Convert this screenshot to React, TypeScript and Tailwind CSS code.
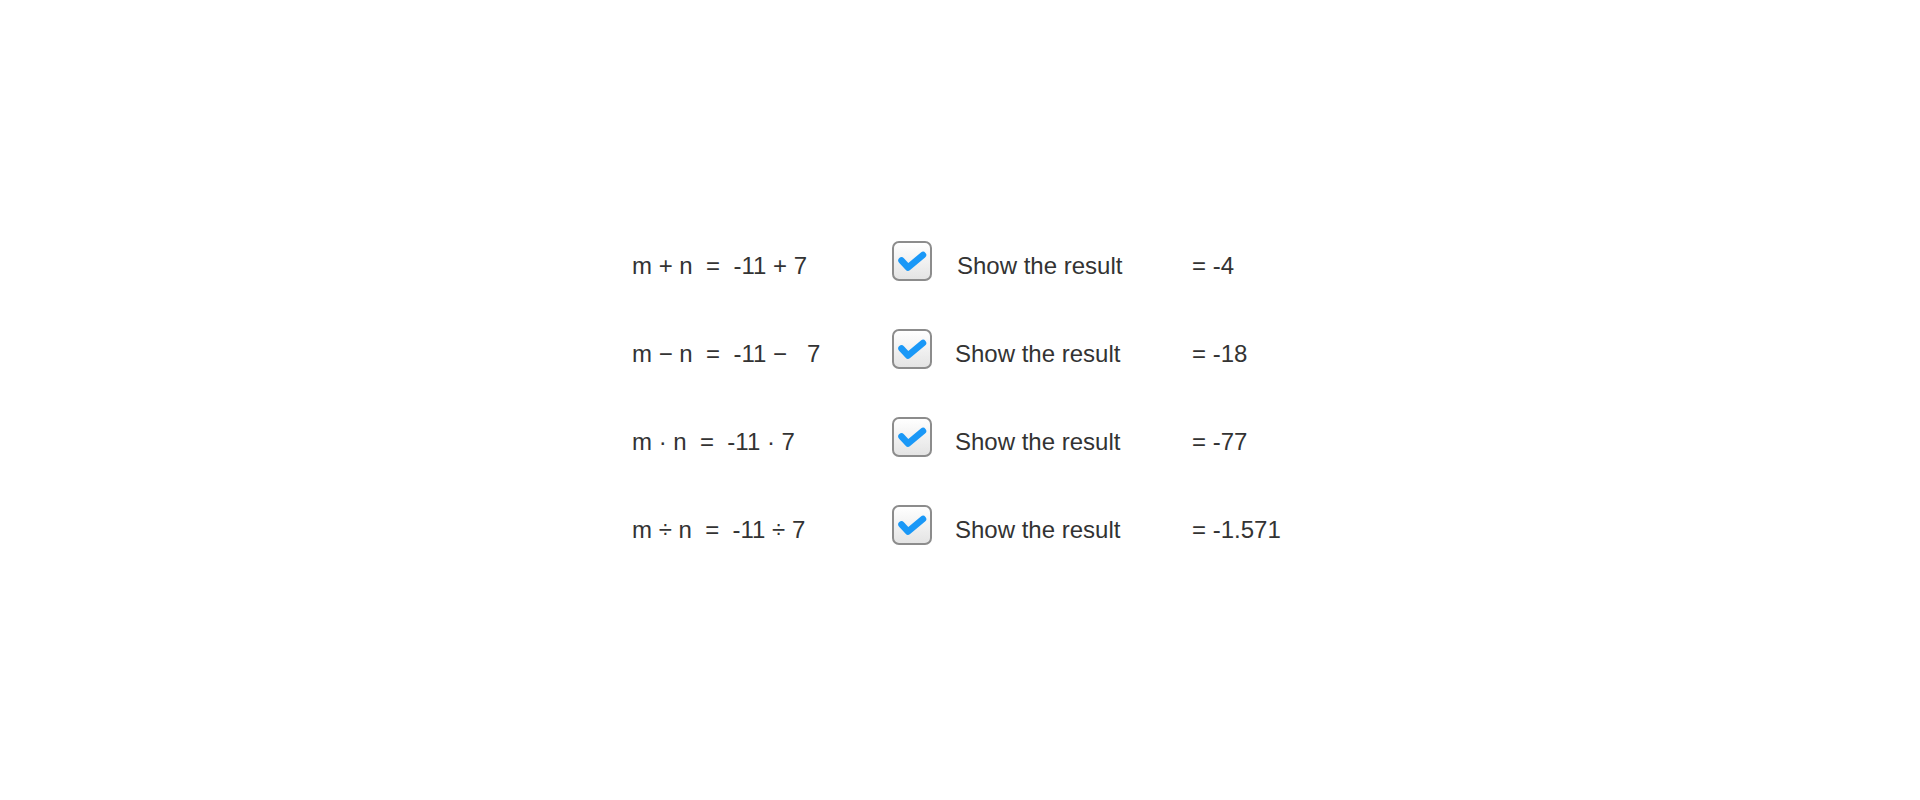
import { useState } from "react";

type Op = {
  label: string;
  expr: string;
  result: string;
};

const m = -11;
const n = 7;

const ops: Op[] = [
  { label: "m + n", expr: `${m} + ${n}`, result: String(m + n) },
  { label: "m − n", expr: `${m} −   ${n}`, result: String(m - n) },
  { label: "m · n", expr: `${m} · ${n}`, result: String(m * n) },
  { label: "m ÷ n", expr: `${m} ÷ ${n}`, result: (m / n).toFixed(3) },
];

function CheckBox({ checked, onToggle }: { checked: boolean; onToggle: () => void }) {
  return (
    <button
      onClick={onToggle}
      className="mb-[10px] flex h-[40px] w-[40px] shrink-0 items-center justify-center rounded-[7px] border-2 border-[#8c8c8c] bg-gradient-to-b from-white to-[#e4e4e4]"
    >
      {checked && (
        <svg width="36" height="36" viewBox="0 0 36 36" fill="none">
          <path
            d="M7.5 17.5 L14 24.5 L29 12"
            stroke="#1a98f7"
            strokeWidth="6.5"
            strokeLinecap="round"
            strokeLinejoin="round"
          />
        </svg>
      )}
    </button>
  );
}

export default function App() {
  const [shown, setShown] = useState<boolean[]>([true, true, true, true]);

  return (
    <div className="min-h-screen w-full bg-white pt-[222px] text-[24px] text-[#333333] font-['Liberation_Sans',Arial,sans-serif]">
      <div className="ml-[632px] flex flex-col">
        {ops.map((op, i) => (
          <div key={op.label} className="flex h-[88px] items-center">
            <div className="w-[260px] whitespace-pre">
              {op.label}  =  {op.expr}
            </div>
            <CheckBox
              checked={shown[i]}
              onToggle={() => setShown((s) => s.map((v, j) => (j === i ? !v : v)))}
            />
            <div className={`w-[260px] whitespace-pre ${i === 0 ? "pl-[25px]" : "pl-[23px]"}`}>
              Show the result
            </div>
            {shown[i] && <div className="whitespace-pre">= {op.result}</div>}
          </div>
        ))}
      </div>
    </div>
  );
}
